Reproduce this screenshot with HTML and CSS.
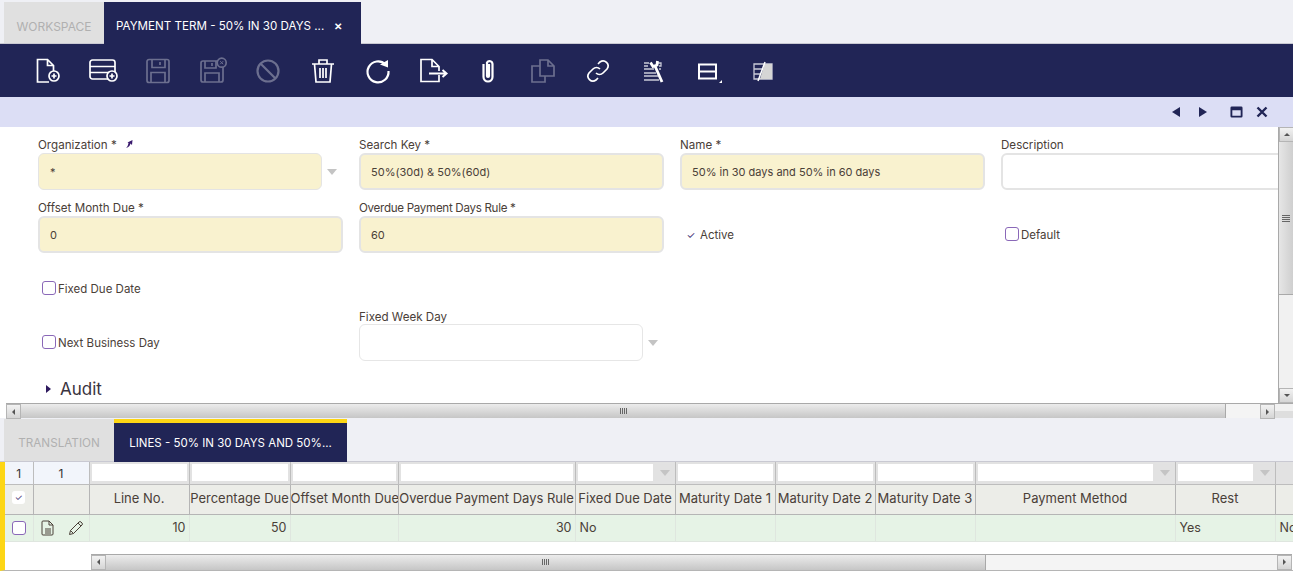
FILE: index.html
```html
<!DOCTYPE html>
<html lang="en">
<head>
    <meta charset="UTF-8">
    <title>Payment Term</title>
    <link rel="stylesheet" href="styles.css">
</head>
<body>
    <div class="tabs">
        <div class="tab">WORKSPACE</div>
        <div class="tab tab-active main-active">PAYMENT TERM - 50% IN 30 DAYS ... <span class="tab-close">&#10005;</span></div>
    </div>

    <div class="toolbar">
        <svg class="tool" viewBox="0 0 26 26"><path d="M14 24H2.500V1.500H12.500l6 6v5.500M12.500 1.500v6h6"/><circle cx="19" cy="18" r="5"/><path d="M16.500 18h5M19 15.500v5"/></svg>
        <svg class="tool" viewBox="0 0 26 26"><rect x="0" y="2" width="25" height="19" rx="2.500"/><path d="M0 8.500h25M0 14.500h25"/><circle cx="22" cy="18" r="5" fill="#212556"/><path d="M19.500 18h5M22 15.500v5"/></svg>
        <svg class="tool off" viewBox="0 0 26 26"><path d="M4 1.500h18a2 2 0 0 1 2 2v19a2 2 0 0 1-2 2H4a2 2 0 0 1-2-2v-19a2 2 0 0 1 2-2zM7 1.500v8h13v-8M6 24.500v-10h14v10M15 4v3"/></svg>
        <svg class="tool off" viewBox="0 0 26 26"><path d="M3 3h18a2 2 0 0 1 2 2v17a2 2 0 0 1-2 2H3a2 2 0 0 1-2-2V5a2 2 0 0 1 2-2zM5 3v7h11V3M5 24v-9h14v9M12 5v3"/><circle cx="21.700" cy="4.700" r="4.500" fill="#212556"/><path d="M20.200 3.200l3 3M23.200 3.200l-3 3" stroke-width="1"/></svg>
        <svg class="tool off thick" viewBox="0 0 26 26"><circle cx="13" cy="13" r="10.500"/><path d="M5.500 5.500l15 15"/></svg>
        <svg class="tool" viewBox="0 0 26 26"><path d="M2 6h22M9 6V2h8v4M4.500 6l1.500 18h14l1.500-18M10 10v10M13 10v10M16 10v10"/></svg>
        <svg class="tool thick" viewBox="0 0 26 26"><path d="M20.500 6.500A10.500 10.500 0 1 0 23.500 13"/><path class="solid" d="M15 6.500l8-4.500v7.500z"/></svg>
        <svg class="tool" viewBox="0 0 26 26"><path d="M19 17v6.500H1V1.500h11l7 7v4.500M12 1.500v7h7"/><path d="M9 15.500h17M22.500 12l4 3.500-4 3.500" stroke-width="2"/></svg>
        <svg class="tool thick" viewBox="0 0 26 26"><path d="M9 6v13a4.500 4.500 0 0 0 9 0V6a3 3 0 0 0-5.500-1.500V18a1 1 0 0 0 2 0V6" transform="translate(-.5)"/></svg>
        <svg class="tool off" viewBox="0 0 26 26"><path d="M10 8H2v16h13v-6M10 8V2h8l6 6v10H10zM18 2v6h6"/></svg>
        <svg class="tool" viewBox="0 0 26 26" stroke-width="2"><path d="M11 15a5 5 0 0 0 7 0l4-4a5 5 0 0 0-7-7l-2 2"/><path d="M15 11a5 5 0 0 0-7 0l-4 4a5 5 0 0 0 7 7l2-2"/></svg>
        <svg class="tool-fine tool-small" viewBox="0 0 24 24"><path d="M3 4h5M3 7h4M16 4h4v3h-2M3 10h10M3 14h12M3 17h14M3 21h15M18 10h2"/><path class="wrench" d="M9.500 3.500l2.500 4 4-1.500.500-4"/><path class="wrench" d="M14 7l7 16"/></svg>
        <svg class="tool tool-small tool-frame" viewBox="0 0 24 24"><rect x="3" y="5.500" width="17" height="14"/><path d="M3 12.500h17"/><path class="solid" d="M26 21v3h-3z"/></svg>
        <svg class="tool-fine tool-small" viewBox="0 0 24 24"><path d="M3 5h18v15H3zM3 10h9M3 15h7"/><path class="solid-grey" d="M13.500 5H21v15H9z"/><path class="pencil" d="M14 3L7 22"/></svg>
    </div>

    <div class="detail-bar">
        <svg class="nav-icon" viewBox="0 0 12 12"><path d="M10 1v10L2 6z"/></svg>
        <svg class="nav-icon" viewBox="0 0 12 12"><path d="M2 1v10l8-5z"/></svg>
        <svg class="nav-icon nav-gap" viewBox="0 0 14 12"><path d="M2 0h10a1.500 1.500 0 0 1 1.500 1.500v9A1.500 1.500 0 0 1 12 12H2a1.500 1.500 0 0 1-1.500-1.500v-9A1.500 1.500 0 0 1 2 0zM2.500 4v6h9V4z"/></svg>
        <svg class="nav-icon nav-close" viewBox="0 0 12 12"><path d="M1.500 1.500l9 9M10.500 1.500l-9 9"/></svg>
    </div>

    <div class="detail">
        <div class="detail-main">
            <div class="form">
                <div class="field">
                    <label>Organization * <svg class="zoom-arrow" viewBox="0 0 10 10"><path d="M2 9c1.500-1 2-3 2.500-5L3.500 3.500 8.500 1 8 6 6.500 4.500C6 6.500 5 8.500 2 9z"/></svg></label>
                    <div class="with-arrow">
                        <div class="input required short">*</div>
                        <span class="caret"></span>
                    </div>
                </div>
                <div class="field"><label>Search Key *</label><div class="input required">50%(30d) &amp; 50%(60d)</div></div>
                <div class="field"><label>Name *</label><div class="input required">50% in 30 days and 50% in 60 days</div></div>
                <div class="field"><label>Description</label><div class="input input-open"></div></div>

                <div class="field"><label>Offset Month Due *</label><div class="input required">0</div></div>
                <div class="field"><label class="label-tight">Overdue Payment Days Rule *</label><div class="input required">60</div></div>
                <div class="field check-field"><div class="check-row"><span class="tick">&#10003;</span>Active</div></div>
                <div class="field check-field"><div class="check-row"><span class="box"></span>Default</div></div>

                <div class="field check-field"><div class="check-row"><span class="box"></span>Fixed Due Date</div></div>
                <div class="field"></div><div class="field"></div><div class="field"></div>

                <div class="field check-field"><div class="check-row"><span class="box"></span>Next Business Day</div></div>
                <div class="field">
                    <label>Fixed Week Day</label>
                    <div class="with-arrow">
                        <div class="input short plain"></div>
                        <span class="caret"></span>
                    </div>
                </div>
            </div>
            <div class="audit"><span class="audit-arrow"></span>Audit</div>
        </div>
        <div class="vscroll">
            <span class="sb-btn sb-up"></span>
            <div class="vthumb"><span class="grip-h"></span></div>
            <div class="vtrack"></div>
            <span class="sb-btn sb-down"></span>
        </div>
    </div>
    <div class="hscroll form-hscroll">
        <span class="sb-btn sb-left"></span>
        <div class="hthumb form-thumb"><span class="grip-v"></span></div>
        <div class="htrack"></div>
        <span class="sb-btn sb-right"></span>
        <span class="sb-corner"></span>
    </div>

    <div class="tabs sub-tabs">
        <div class="tab sub-tab">TRANSLATION</div>
        <div class="tab tab-active sub-active">LINES - 50% IN 30 DAYS AND 50%...</div>
    </div>

    <div class="grid-wrap">
        <table class="grid">
            <colgroup>
                <col class="c28"><col class="c56"><col class="c100"><col class="c101"><col class="c108"><col class="c177">
                <col class="c100"><col class="c100"><col class="c100"><col class="c100"><col class="c200"><col class="c100"><col class="c100">
            </colgroup>
            <tr class="filters">
                <td class="count">1</td><td class="count">1</td>
                <td><div class="filter"></div></td>
                <td><div class="filter"></div></td>
                <td><div class="filter"></div></td>
                <td><div class="filter"></div></td>
                <td><div class="filter has-caret"></div><span class="caret filter-caret"></span></td>
                <td><div class="filter"></div></td>
                <td><div class="filter"></div></td>
                <td><div class="filter"></div></td>
                <td><div class="filter has-caret"></div><span class="caret filter-caret"></span></td>
                <td><div class="filter has-caret"></div><span class="caret filter-caret"></span></td>
                <td></td>
            </tr>
            <tr class="heads">
                <th><span class="head-check">&#10003;</span></th>
                <th></th>
                <th>Line No.</th>
                <th>Percentage Due</th>
                <th>Offset Month Due</th>
                <th>Overdue Payment Days Rule</th>
                <th>Fixed Due Date</th>
                <th>Maturity Date 1</th>
                <th>Maturity Date 2</th>
                <th>Maturity Date 3</th>
                <th>Payment Method</th>
                <th>Rest</th>
                <th></th>
            </tr>
            <tr class="line">
                <td class="center"><span class="box row-box"></span></td>
                <td class="row-tools">
                    <svg class="row-icon" viewBox="0 0 14 16"><path d="M2 1h6l4 4v9a1 1 0 0 1-1 1H2a1 1 0 0 1-1-1V2a1 1 0 0 1 1-1zM8 1v4h4M4 9h6M4 11h6M4 13h6"/></svg>
                    <svg class="row-icon pen-icon" viewBox="0 0 16 16"><path d="M1.500 14.500l1-4L11 2a1.500 1.500 0 0 1 2 0l1 1a1.500 1.500 0 0 1 0 2l-8.500 8.500zM2.500 10.500l3 3M10 3l3 3"/></svg>
                </td>
                <td class="num">10</td>
                <td class="num">50</td>
                <td></td>
                <td class="num">30</td>
                <td>No</td>
                <td></td><td></td><td></td><td></td>
                <td>Yes</td>
                <td>No</td>
            </tr>
        </table>
        <div class="hscroll grid-hscroll">
            <span class="sb-btn sb-left"></span>
            <div class="hthumb grid-thumb"><span class="grip-v"></span></div>
            <div class="htrack"></div>
            <span class="sb-btn sb-right"></span>
        </div>
    </div>
</body>
</html>
```

FILE: styles.css
```css
* {
    box-sizing: border-box;
}
body {
    margin: 0;
    width: 1293px;
    height: 571px;
    overflow: hidden;
    background: #fff;
    font-family: Inter, "Open Sans", sans-serif;
    font-size: 11px;
    color: #4a4038;
}

/* tabs */
.tabs {
    height: 44px;
    padding: 2px 0 0 4px;
    display: flex;
    background: #eff0f5;
    border-bottom: 1px solid #c9c9d2;
}
.tab {
    width: 100px;
    padding-top: 7px;
    background: #e0e0e0;
    color: #b0b0b0;
    font-size: 12px;
    display: flex;
    align-items: center;
    justify-content: center;
}
.tab-active {
    background: #212556;
    color: #fff;
    margin-bottom: -1px;
}
.main-active {
    width: 257px;
    padding: 6px 0 0 12px;
    font-size: 11.600px;
    justify-content: flex-start;
    white-space: pre;
}
.tab-close {
    margin-left: 6px;
    font-size: 10px;
    font-weight: bold;
}

/* toolbar */
.toolbar {
    height: 53px;
    background: #212556;
    padding-left: 20px;
    display: flex;
    align-items: center;
}
.tool, .tool-fine {
    flex: none;
    width: 26px;
    height: 26px;
    margin: 0 14.500px;
    fill: none;
    stroke: #fff;
    stroke-width: 1.700;
    overflow: visible;
}
.tool.off {
    stroke: #6c6f8f;
}
.tool.thick {
    stroke-width: 2.200;
}
.tool-small {
    width: 24px;
    height: 24px;
    margin: 0 15.500px;
}
.tool.tool-frame {
    stroke-width: 2;
}
.tool-fine {
    stroke: #c9cad8;
    stroke-width: 1.300;
}
.wrench {
    stroke: #fff;
    stroke-width: 2.800;
}
.pencil {
    stroke: #fff;
    stroke-width: 1.500;
}
.solid {
    fill: #fff;
    stroke: none;
}
.solid-grey {
    fill: #d5d5d5;
    stroke: none;
}

.detail-bar {
    height: 30px;
    background: #dcdef5;
    display: flex;
    align-items: center;
    justify-content: flex-end;
    padding-right: 25px;
}
.nav-icon {
    width: 12px;
    height: 12px;
    margin-left: 15px;
    fill: #212556;
}
.nav-gap {
    width: 13px;
    margin-left: 21px;
}
.nav-close {
    margin-left: 13px;
    fill: none;
    stroke: #212556;
    stroke-width: 2.400;
}

/* form */
.detail {
    height: 276px;
    margin-left: 5px;
    display: flex;
}
.detail-main {
    flex: 1;
    overflow: hidden;
    padding: 11px 0 0 33px;
}
.form {
    display: grid;
    grid-template-columns: repeat(4, 305px);
    grid-template-rows: 62px 63px 54px 54px;
    column-gap: 16px;
}
.field {
    display: flex;
    flex-direction: column;
    justify-content: flex-end;
    padding-bottom: 10px;
}
.field label {
    height: 15px;
    line-height: 14px;
    font-size: 11.600px;
    white-space: nowrap;
}
.field .label-tight {
    letter-spacing: -0.300px;
}
.zoom-arrow {
    width: 10px;
    height: 10px;
    margin-left: 4px;
    fill: #3a1a6e;
}
.input {
    height: 37px;
    border: 2px solid #e4e4e4;
    border-radius: 6px;
    padding: 0 10px;
    background: #fff;
    line-height: 35px;
    white-space: nowrap;
}
.required {
    background: #f9f2cf;
}
.short {
    width: 284px;
    border-width: 1px;
    line-height: 37px;
    padding: 0 11px;
}
.plain {
    border-color: #e6e6e6;
}
.input-open {
    width: 320px;
}
.with-arrow {
    display: flex;
    align-items: center;
}
.caret {
    width: 0;
    height: 0;
    margin-left: 5px;
    border: 5px solid transparent;
    border-top: 6px solid #c4c4c4;
    border-bottom: 0;
}
.check-field {
    padding-bottom: 20px;
}
.check-row {
    display: flex;
    align-items: center;
    height: 16px;
    padding-left: 4px;
    font-size: 11.500px;
}
.box {
    width: 14px;
    height: 14px;
    margin: -2px 2px 0 0;
    border: 1px solid #8a68b8;
    border-radius: 3px;
    background: #fff;
}
.tick {
    width: 14px;
    margin-right: 2px;
    color: #3a2a70;
    font-size: 10px;
    text-align: center;
}
.audit {
    margin-top: 8px;
    padding-left: 8px;
    font-size: 17px;
    display: flex;
    align-items: center;
    color: #3a3340;
}
.audit-arrow {
    width: 0;
    height: 0;
    margin-right: 9px;
    border: 4px solid transparent;
    border-left: 5px solid #2e1a5e;
    border-right: 0;
}

/* scrollbars */
.vscroll {
    width: 15px;
    flex: none;
    display: flex;
    flex-direction: column;
    background: #f1f1f1;
    border-left: 1px solid #a9a9a9;
}
.vthumb {
    height: 153px;
    display: flex;
    align-items: center;
    justify-content: center;
    background: linear-gradient(to right, #e6e6e6, #cfcfcf);
    border-bottom: 1px solid #a9a9a9;
}
.vtrack, .htrack {
    flex: 1;
}
.hscroll {
    height: 15px;
    display: flex;
    background: #f4f4f4;
}
.form-hscroll {
    margin-left: 6px;
    border-top: 1px solid #a9a9a9;
}
.hthumb {
    display: flex;
    align-items: center;
    justify-content: center;
    background: linear-gradient(to bottom, #ececec, #c6c6c6);
    border-right: 1px solid #a9a9a9;
}
.form-thumb {
    width: 1205px;
}
.sb-btn {
    flex: none;
    width: 15px;
    height: 15px;
    display: flex;
    align-items: center;
    justify-content: center;
    background: linear-gradient(to bottom, #f2f2f2, #d5d5d5);
    border: 1px solid #b5b5b5;
}
.sb-corner {
    flex: none;
    width: 18px;
    background: linear-gradient(to bottom, #f1f1f1 50%, #dedede 50%);
}
.sb-btn::after {
    content: "";
    width: 0;
    height: 0;
    border: 3px solid transparent;
}
.sb-left::after {
    border-right-color: #555;
    border-left: 0;
}
.sb-right::after {
    border-left-color: #555;
    border-right: 0;
}
.sb-up::after {
    border-bottom-color: #555;
    border-top: 0;
}
.sb-down::after {
    border-top-color: #555;
    border-bottom: 0;
}
.grip-v {
    width: 7px;
    height: 6px;
    background: repeating-linear-gradient(to right, #666 0, #666 1px, transparent 1px, transparent 2px);
}
.grip-h {
    width: 8px;
    height: 7px;
    background: repeating-linear-gradient(to bottom, #666 0, #666 1px, transparent 1px, transparent 2px);
}

/* sub tabs */
.sub-tabs {
    padding: 1px 0 0 4px;
}
.sub-tab {
    width: 110px;
    padding-top: 6px;
    font-size: 11.700px;
}
.sub-active {
    width: 233px;
    padding-top: 0;
    font-size: 11.500px;
    border-top: 4px solid #fdd615;
}

/* grid */
.grid-wrap {
    height: 109px;
    overflow: hidden;
    background: #fff;
    border-left: 5px solid #fdd615;
    border-bottom: 1px solid #b5b5b5;
}
.grid {
    width: 1360px;
    table-layout: fixed;
    border-collapse: collapse;
    font-size: 12.500px;
}
.c28 { width: 28px; }
.c56 { width: 56px; }
.c100 { width: 100px; }
.c101 { width: 101px; }
.c108 { width: 108px; }
.c177 { width: 177px; }
.c200 { width: 200px; }
.grid td, .grid th {
    padding: 0;
    white-space: nowrap;
    overflow: hidden;
}
.filters td {
    height: 22px;
    background: #e2e2e2;
    border: 1px solid #bdbdbd;
    border-width: 0 1px 1px 0;
    padding: 2px 2px;
    position: relative;
}
.filters .count {
    background: #f2f5fb;
    text-align: center;
    padding: 1px 0 0;
    font-size: 12px;
    color: #333;
}
.filter {
    height: 17px;
    background: #fff;
}
.has-caret {
    margin-right: 20px;
}
.filter-caret {
    position: absolute;
    right: 5px;
    top: 8px;
}
.heads th {
    height: 30px;
    background: #ecede8;
    border: 1px solid #b5b5b5;
    border-width: 0 1px 1px 0;
    font-size: 13px;
    font-weight: normal;
    text-align: center;
    padding-bottom: 2px;
}
.head-check {
    display: inline-block;
    width: 13px;
    height: 13px;
    margin-bottom: 5px;
    background: #fff;
    border-radius: 3px;
    line-height: 13px;
    font-size: 9px;
    color: #3a2a70;
}
.line td {
    height: 27px;
    background: #e6f3e6;
    border: 1px solid #dfe6df;
    border-width: 0 1px 1px 0;
    padding: 0 4px;
}
.line .center {
    padding: 0;
    text-align: center;
}
.line .num {
    text-align: right;
    padding-right: 3px;
}
.row-box {
    display: block;
    margin: 0 auto;
}
.line .row-tools {
    padding: 0 0 0 7px;
}
.row-icon {
    width: 14px;
    height: 16px;
    margin-right: 10px;
    vertical-align: middle;
    fill: none;
    stroke: #4a4038;
    stroke-width: 1;
}
.pen-icon {
    width: 16px;
    margin-right: 0;
}
.grid-hscroll {
    margin: 12px 1px 0 86px;
    height: 16px;
    border-top: 1px solid #a9a9a9;
}
.grid-thumb {
    width: 880px;
}
```
